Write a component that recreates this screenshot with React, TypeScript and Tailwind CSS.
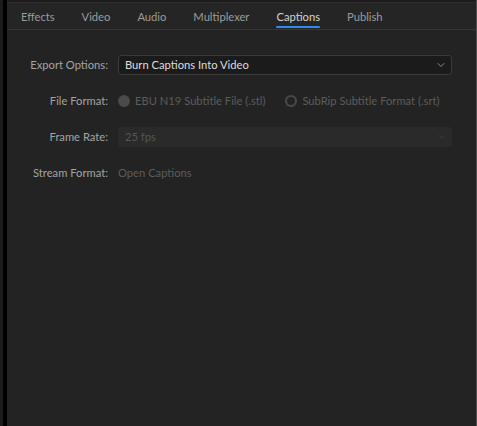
import { ChevronDown } from "lucide-react";

const tabs = ["Effects", "Video", "Audio", "Multiplexer", "Captions", "Publish"];

function Row({ label, children }: { label: string; children: React.ReactNode }) {
  return (
    <div className="flex items-center h-[20px]">
      <div className="w-[101px] shrink-0 text-right text-[#a3a3a3] whitespace-nowrap">{label}</div>
      <div className="ml-[10px] flex-1 min-w-0">{children}</div>
    </div>
  );
}

export default function App() {
  return (
    <div
      className="w-[477px] h-[426px] flex bg-[#1e1e1e] text-[11px] overflow-hidden"
      style={{ fontFamily: 'Lato, "Noto Sans", sans-serif' }}
    >
      <div className="w-[3px] shrink-0 bg-[#1c1c1c]" />
      <div className="w-[4px] shrink-0 bg-black" />
      <div className="flex-1 flex flex-col bg-[#232323] border-r border-[#4f4f4f]">
        <div className="h-[3px] shrink-0 bg-[#1c1c1c] border-b border-[#2e2e2e]" />
        <div className="h-[27px] shrink-0 flex items-stretch pl-[14px] pt-[2px] border-b border-[#353535] bg-[#252525]">
          {tabs.map((t) => {
            const active = t === "Captions";
            return (
              <div
                key={t}
                className={`relative mr-[27px] flex items-center text-[11.2px] whitespace-nowrap ${
                  active ? "text-[#d4d4d4]" : "text-[#9c9c9c]"
                }`}
              >
                {t}
                {active && (
                  <div className="absolute left-0 right-0 bottom-[1px] h-[2px] bg-[#2d8ceb] rounded-full" />
                )}
              </div>
            );
          })}
        </div>
        <div className="flex flex-col gap-[16px] pt-[25px] pr-[24px] text-[11.2px]">
          <Row label="Export Options:">
            <div className="h-[20px] flex items-center justify-between pl-[6px] pr-[4px] bg-[#1b1b1b] border border-[#3a3a3a] rounded-[3px] text-[#dedede]">
              <span>Burn Captions Into Video</span>
              <ChevronDown size={12} strokeWidth={1.5} className="text-[#b0b0b0]" />
            </div>
          </Row>
          <Row label="File Format:">
            <div className="flex items-center text-[#5c5c5c] whitespace-nowrap">
              <span className="w-[12px] h-[12px] rounded-full bg-[#4a4a4a] mr-[5px]" />
              <span>EBU N19 Subtitle File (.stl)</span>
              <span className="ml-[20px] w-[12px] h-[12px] rounded-full border-2 border-[#4a4a4a] mr-[5px]" />
              <span>SubRip Subtitle Format (.srt)</span>
            </div>
          </Row>
          <Row label="Frame Rate:">
            <div className="h-[20px] flex items-center justify-between pl-[7px] pr-[4px] bg-[#2a2a2a] rounded-[3px] text-[#555555]">
              <span>25 fps</span>
              <ChevronDown size={12} strokeWidth={1.5} className="text-[#454545]" />
            </div>
          </Row>
          <Row label="Stream Format:">
            <span className="text-[#5c5c5c]">Open Captions</span>
          </Row>
        </div>
      </div>
    </div>
  );
}
